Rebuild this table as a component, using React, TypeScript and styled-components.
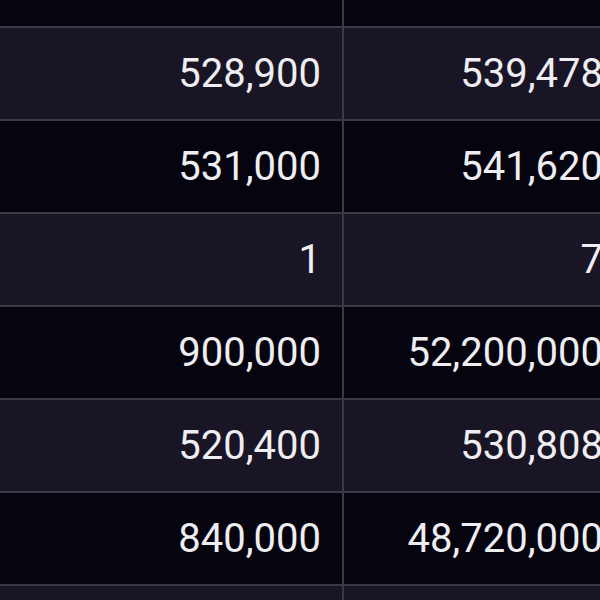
import styled, { createGlobalStyle } from 'styled-components';

const GlobalStyle = createGlobalStyle`
	html, body {
		margin: 0;
		padding: 0;
		background: #06050f;
		overflow: hidden;
	}
`;

const rows = [
	['', ''],
	['528,900', '539,478'],
	['531,000', '541,620'],
	['1', '7'],
	['900,000', '52,200,000'],
	['520,400', '530,808'],
	['840,000', '48,720,000'],
	['', ''],
];

const Viewport = styled.div`
	width: 600px;
	height: 600px;
	overflow: hidden;
`;

const Table = styled.div`
	margin-top: -65px;
	display: flex;
	flex-direction: column;
	width: 624px;
`;

const Row = styled.div<{ $striped: boolean }>`
	display: grid;
	grid-template-columns: 344px 280px;
	height: 91px;
	border-bottom: 2px solid #3a3944;
	background: ${(props) => (props.$striped ? '#1a1525' : '#06050f')};
`;

const Cell = styled.div<{ $divider?: boolean }>`
	display: flex;
	align-items: center;
	justify-content: flex-end;
	padding-right: 21px;
	border-right: ${(props) => (props.$divider ? '2px solid #3a3944' : 'none')};
	font-family: Roboto, "Liberation Sans", sans-serif;
	font-size: 40px;
	color: #eeeef2;
	white-space: nowrap;
`;

const App = () => {
	return (
		<Viewport>
			<GlobalStyle />
			<Table>
				{rows.map(([left, right], i) => (
					<Row key={i} $striped={i % 2 === 1}>
						<Cell $divider>{left}</Cell>
						<Cell>{right}</Cell>
					</Row>
				))}
			</Table>
		</Viewport>
	);
};

export default App;
